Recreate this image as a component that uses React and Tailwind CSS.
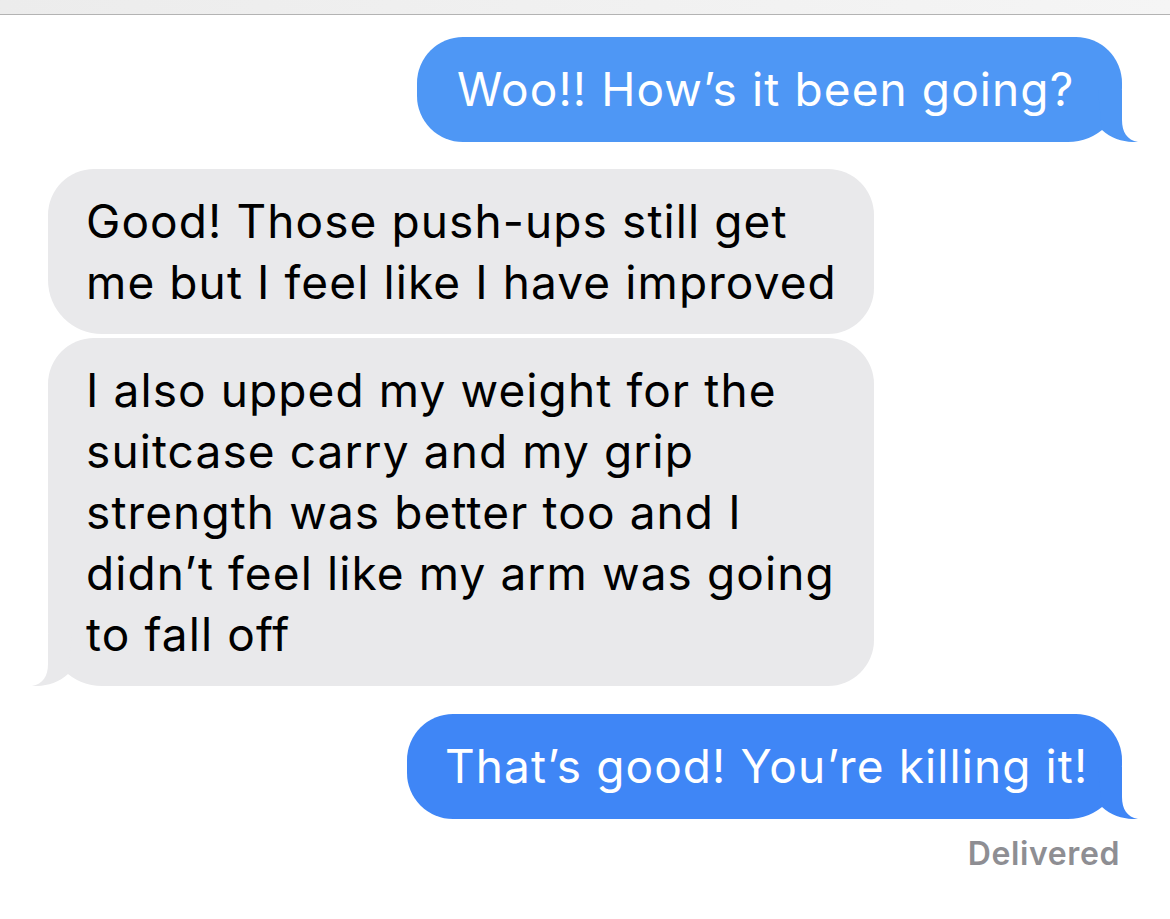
import React from 'react';

const Tail = ({ color, side }) => (
    <svg
        width="60"
        height="52"
        viewBox="0 0 60 52"
        className={`absolute bottom-0 ${side === 'right' ? 'right-[-20px]' : 'left-[-20px] -scale-x-100'}`}
    >
        <path d="M40 0 L40 30 C40 42 45 50 56 52 C46 52.6 30 50 20 40 L16 0 Z" fill={color} />
    </svg>
);

const Bubble = ({ side, color, className, children }) => (
    <div
        className={`relative py-[22px] text-[46px] leading-[60.8px] tracking-[1.1px] whitespace-nowrap ${
            side === 'right' ? 'rounded-[46px] rounded-br-[54px] text-white' : 'rounded-[46px] rounded-bl-[54px] text-black'
        } ${className}`}
    >
        {children}
        {color && <Tail color={color} side={side} />}
    </div>
);

const App = () => {
    return (
        <div className="min-h-[919px] bg-white font-['Inter','Liberation_Sans',sans-serif]">
            {/* top strip */}
            <div className="h-[15px] bg-gradient-to-r from-[#ececec] to-[#f5f5f5] border-b border-[#b3b3b3]" />

            <div className="flex flex-col px-[48px] pt-[22px]">
                <div className="flex justify-end">
                    <Bubble side="right" color="#4e97f5" className="w-[705px] pl-[40px] bg-[#4e97f5]">
                        Woo!! How’s it been going?
                    </Bubble>
                </div>

                <div className="flex justify-start mt-[27px]">
                    <Bubble side="left" className="w-[826px] pl-[38px] bg-[#e9e9eb]">
                        <div>Good! Those push-ups still get</div>
                        <div>me but I feel like I have improved</div>
                    </Bubble>
                </div>

                <div className="flex justify-start mt-[4px]">
                    <Bubble side="left" color="#e9e9eb" className="w-[826px] pl-[38px] bg-[#e9e9eb]">
                        <div>I also upped my weight for the</div>
                        <div>suitcase carry and my grip</div>
                        <div>strength was better too and I</div>
                        <div>didn’t feel like my arm was going</div>
                        <div>to fall off</div>
                    </Bubble>
                </div>

                <div className="flex justify-end mt-[28px]">
                    <Bubble side="right" color="#3f86f6" className="w-[715px] pl-[38px] bg-[#3f86f6]">
                        That’s good! You’re killing it!
                    </Bubble>
                </div>

                <div className="mt-[16px] pr-[2px] text-right text-[32px] leading-[38px] tracking-[0.6px] font-semibold text-[#8e8e93]">
                    Delivered
                </div>
            </div>
        </div>
    );
};

export default App;
